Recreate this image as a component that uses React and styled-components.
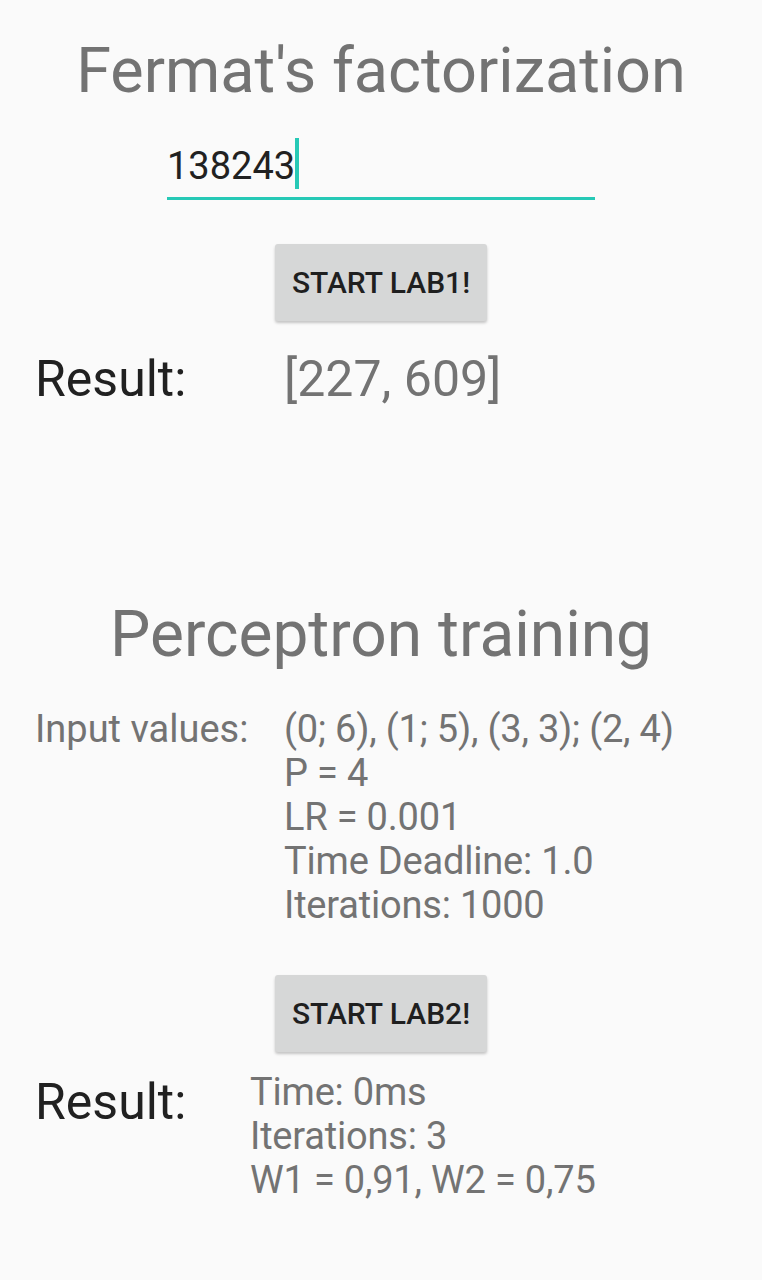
import React from "react"
import styled, { createGlobalStyle } from "styled-components"

const GlobalStyle = createGlobalStyle`
  html, body {
    margin: 0;
    padding: 0;
    background: #fafafa;
  }
  body {
    font-family: Roboto, "Liberation Sans", sans-serif;
  }
`

const Page = styled.div`
  display: flex;
  flex-direction: column;
  width: 762px;
  min-height: 1280px;
  padding-top: 34px;
  box-sizing: border-box;
  background: #fafafa;
`

const Title = styled.h1`
  margin: ${props => props.margin || "0"};
  font-size: ${props => props.size}px;
  line-height: ${props => props.lh}px;
  font-weight: 400;
  color: #737373;
  text-align: center;
`

const Field = styled.div`
  display: flex;
  align-items: flex-start;
  width: 428px;
  margin: 30px 0 0 167px;
  padding-bottom: 5px;
  border-bottom: 3px solid #26c9b6;
`

const FieldText = styled.span`
  margin-top: 3px;
  font-size: 38px;
  line-height: 51px;
  color: #212121;
`

const Caret = styled.span`
  display: inline-block;
  width: 4px;
  height: 51px;
  background: #26c9b6;
`

const Button = styled.button`
  align-self: center;
  width: 212px;
  height: 77px;
  margin: ${props => props.margin};
  padding: 0;
  border: none;
  border-radius: 3px;
  background: #d6d7d7;
  box-shadow: 0 2px 3px rgba(0, 0, 0, 0.22);
  font-family: Roboto, "Liberation Sans", sans-serif;
  font-size: 30px;
  font-weight: 500;
  color: #1f1f1f;
`

const Row = styled.div`
  display: grid;
  grid-template-columns: ${props => props.labelWidth}px 1fr;
  padding-left: 35px;
  margin: ${props => props.margin};
`

const Label = styled.div`
  margin-top: ${props => props.offset || 0}px;
  font-size: ${props => props.size}px;
  line-height: ${props => props.lh}px;
  color: ${props => (props.dark ? "#212121" : "#737373")};
`

const Values = styled.div`
  display: flex;
  flex-direction: column;
  font-size: ${props => props.size}px;
  line-height: ${props => props.lh}px;
  letter-spacing: ${props => props.spacing || 0}px;
  color: #737373;
`

const inputs = [
  "(0; 6), (1; 5), (3, 3); (2, 4)",
  "P = 4",
  "LR = 0.001",
  "Time Deadline: 1.0",
  "Iterations: 1000",
]

const results = ["Time: 0ms", "Iterations: 3", "W1 = 0,91, W2 = 0,75"]

const App = () => {
  return (
    <>
      <GlobalStyle />
      <Page>
        <Title size={63} lh={74}>
          Fermat's factorization
        </Title>
        <Field>
          <FieldText>138243</FieldText>
          <Caret />
        </Field>
        <Button margin="44px 0 0">START LAB1!</Button>
        <Row labelWidth={249} margin="29px 0 0">
          <Label dark size={50} lh={59}>
            Result:
          </Label>
          <Values size={50} lh={59}>
            [227, 609]
          </Values>
        </Row>

        <Title size={64} lh={75} margin="188px 0 0">
          Perceptron training
        </Title>
        <Row labelWidth={249} margin="35px 0 0">
          <Label size={38} lh={44}>
            Input values:
          </Label>
          <Values size={38} lh={44} spacing={-0.2}>
            {inputs.map(line => (
              <span key={line}>{line}</span>
            ))}
          </Values>
        </Row>
        <Button margin="48px 0 0">START LAB2!</Button>
        <Row labelWidth={215} margin="18px 0 0">
          <Label dark size={50} lh={59} offset={3}>
            Result:
          </Label>
          <Values size={38} lh={44} spacing={-0.2}>
            {results.map(line => (
              <span key={line}>{line}</span>
            ))}
          </Values>
        </Row>
      </Page>
    </>
  )
}

export default App
